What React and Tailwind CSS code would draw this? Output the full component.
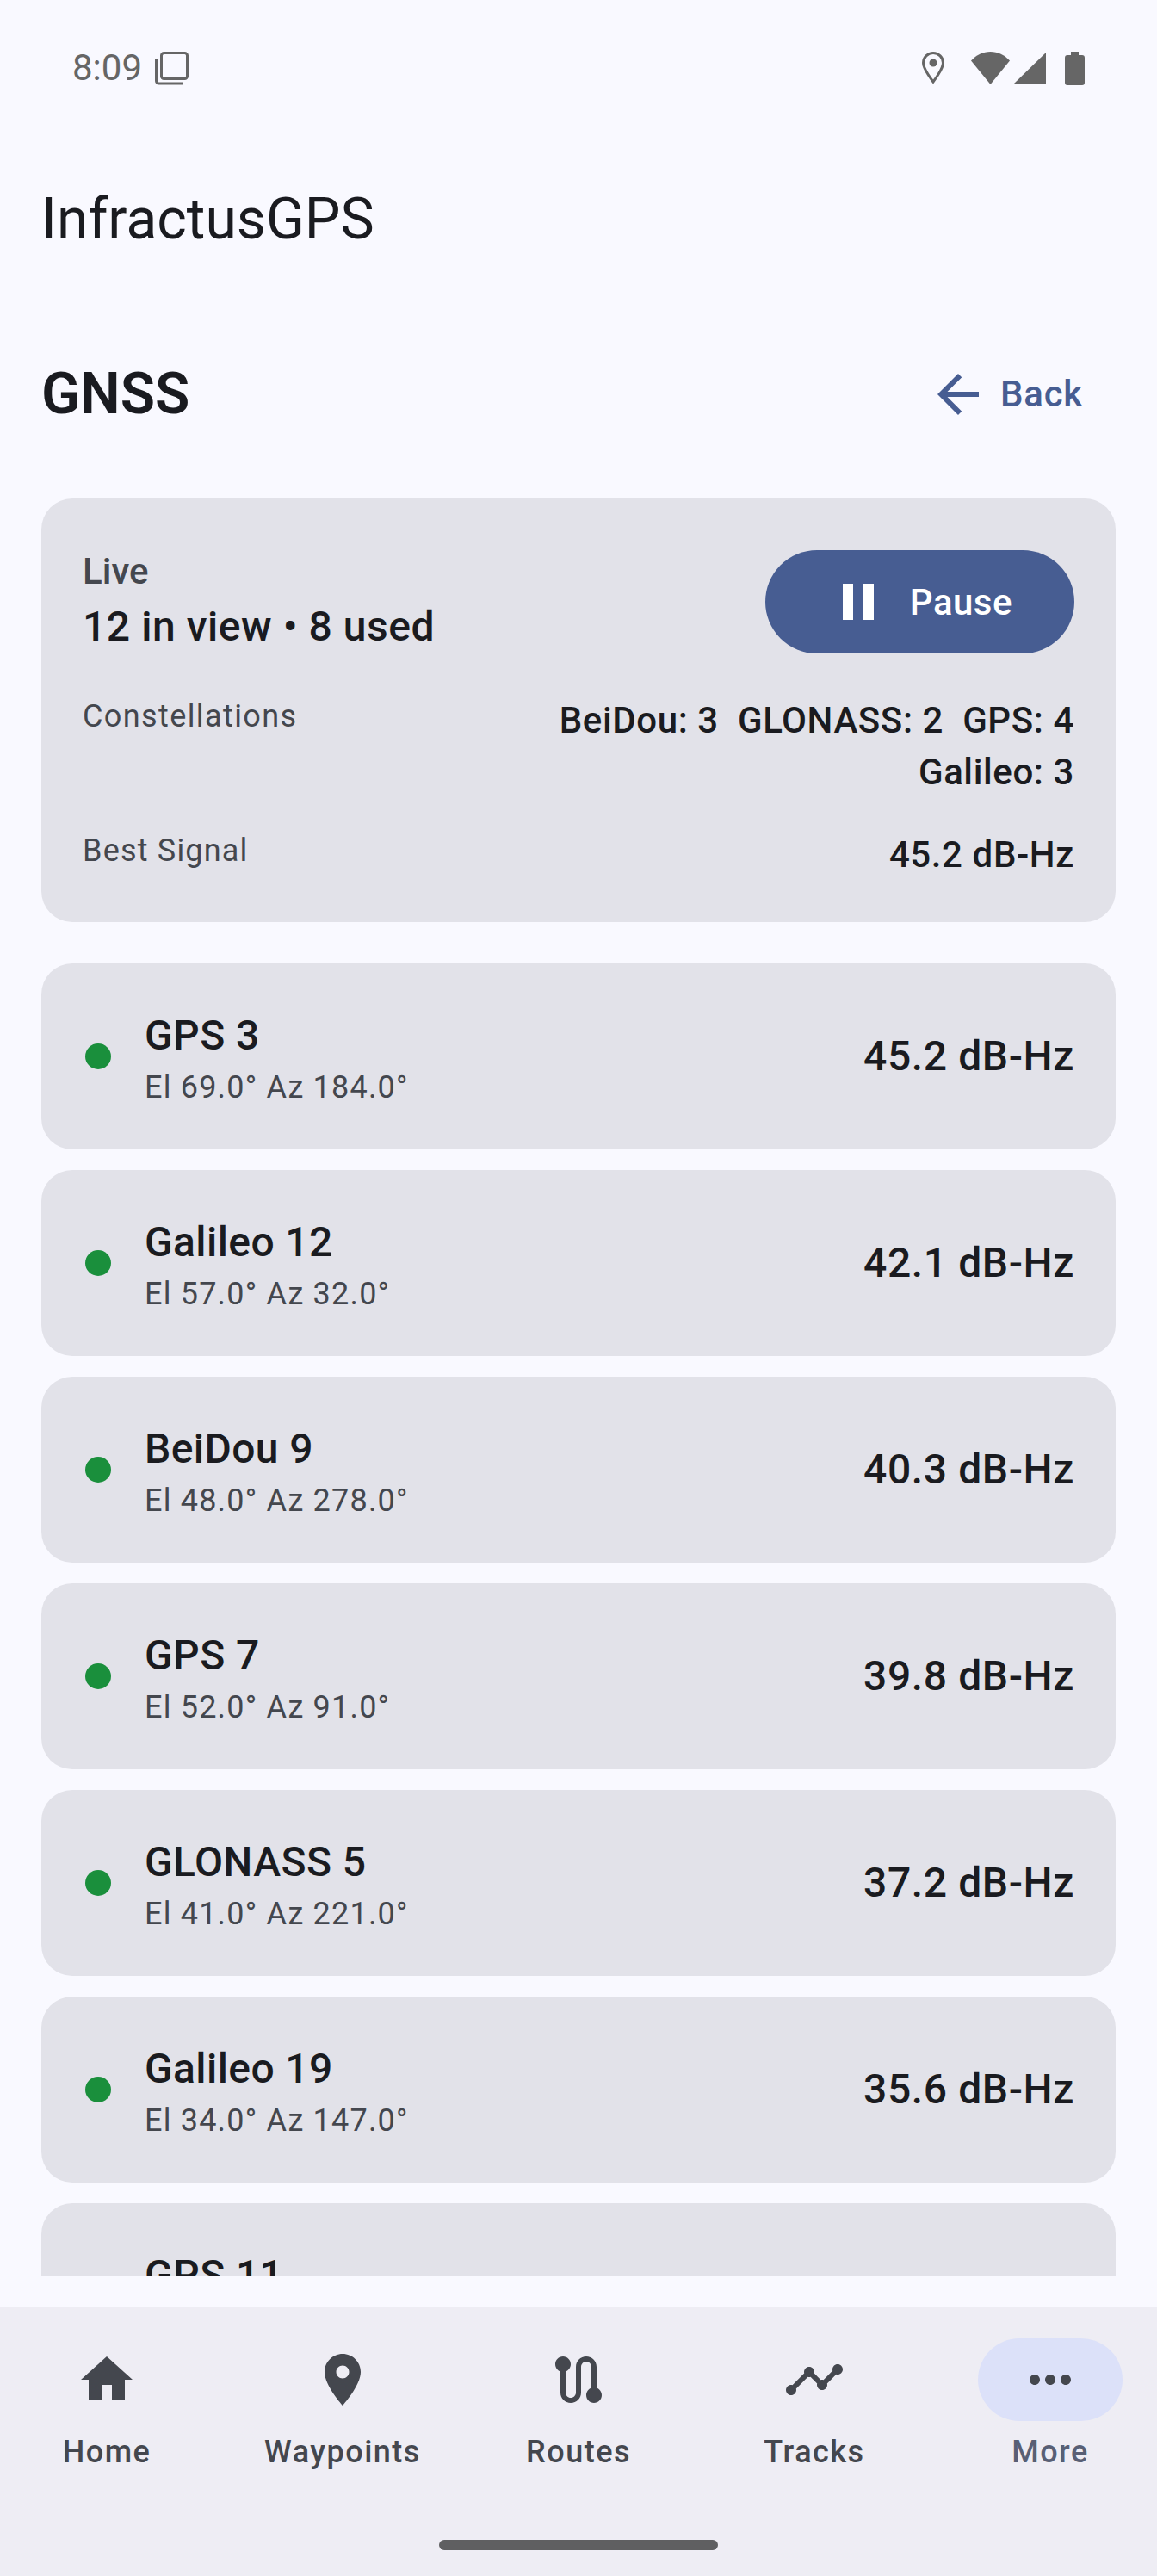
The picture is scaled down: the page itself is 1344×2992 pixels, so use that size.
import React from 'react';

const FONT = "font-['Roboto',sans-serif]";

// the last row is cut by the list edge: only its name shows in the picture
const satellites = [
  { name: 'GPS 3', pos: 'El 69.0° Az 184.0°', snr: '45.2 dB-Hz' },
  { name: 'Galileo 12', pos: 'El 57.0° Az 32.0°', snr: '42.1 dB-Hz' },
  { name: 'BeiDou 9', pos: 'El 48.0° Az 278.0°', snr: '40.3 dB-Hz' },
  { name: 'GPS 7', pos: 'El 52.0° Az 91.0°', snr: '39.8 dB-Hz' },
  { name: 'GLONASS 5', pos: 'El 41.0° Az 221.0°', snr: '37.2 dB-Hz' },
  { name: 'Galileo 19', pos: 'El 34.0° Az 147.0°', snr: '35.6 dB-Hz' },
  { name: 'GPS 11', pos: '', snr: '' },
];

const navItems = [
  { label: 'Home', d: 'M10 20v-6h4v6h5v-8h3L12 3 2 12h3v8z' },
  { label: 'Waypoints', d: 'M12 2C8.13 2 5 5.13 5 9c0 5.25 7 13 7 13s7-7.75 7-13c0-3.87-3.13-7-7-7zm0 9.5c-1.38 0-2.5-1.12-2.5-2.5s1.12-2.5 2.5-2.5 2.5 1.12 2.5 2.5-1.12 2.5-2.5 2.5z' },
  { label: 'Routes', d: 'M19 15.18V7c0-2.21-1.79-4-4-4s-4 1.79-4 4v10c0 1.1-.9 2-2 2s-2-.9-2-2V8.82C8.16 8.4 9 7.3 9 6c0-1.66-1.34-3-3-3S3 4.34 3 6c0 1.3.84 2.4 2 2.82V17c0 2.21 1.79 4 4 4s4-1.79 4-4V7c0-1.1.9-2 2-2s2 .9 2 2v8.18c-1.16.41-2 1.51-2 2.82 0 1.66 1.34 3 3 3s3-1.34 3-3c0-1.3-.84-2.4-2-2.82z' },
  { label: 'Tracks', d: 'M23 8c0 1.1-.9 2-2 2-.18 0-.35-.02-.51-.07l-3.56 3.55c.05.16.07.34.07.52 0 1.1-.9 2-2 2s-2-.9-2-2c0-.18.02-.36.07-.52l-2.55-2.55c-.16.05-.34.07-.52.07s-.36-.02-.52-.07l-4.55 4.56c.05.16.07.33.07.51 0 1.1-.9 2-2 2s-2-.9-2-2 .9-2 2-2c.18 0 .35.02.51.07l4.56-4.55C8.02 9.36 8 9.18 8 9c0-1.1.9-2 2-2s2 .9 2 2c0 .18-.02.36-.07.52l2.55 2.55c.16-.05.34-.07.52-.07s.36.02.52.07l3.55-3.56C19.02 8.35 19 8.18 19 8c0-1.1.9-2 2-2s2 .9 2 2z' },
  { label: 'More', active: true, d: 'M6 10c-1.1 0-2 .9-2 2s.9 2 2 2 2-.9 2-2-.9-2-2-2zm12 0c-1.1 0-2 .9-2 2s.9 2 2 2 2-.9 2-2-.9-2-2-2zm-6 0c-1.1 0-2 .9-2 2s.9 2 2 2 2-.9 2-2-.9-2-2-2z' },
];

const StatusBar = () => (
  <div className="h-[158px] shrink-0 pl-[84px] pr-[84px] flex items-center justify-between text-[#666666]">
    <div className="flex items-center gap-[14px]">
      <span className="text-[42px] leading-[50px]">8:09</span>
      <svg width="40" height="40" viewBox="0 0 40 40" fill="none" stroke="#666666" strokeWidth="3">
        <rect x="8.5" y="2.5" width="30" height="30" rx="3" />
        <path d="M2.5 9v26a3 3 0 0 0 3 3H33" />
      </svg>
    </div>
    <div className="flex items-center">
      <svg width="26" height="38" viewBox="0 0 26 38" className="mr-[31px]">
        <path d="M13 1.5C6.6 1.5 1.5 6.6 1.5 13c0 7.500 11.500 22 11.500 22s11.500-14.500 11.500-22C24.500 6.600 19.400 1.500 13 1.500z" fill="none" stroke="#666666" strokeWidth="3" />
        <circle cx="13" cy="13" r="4.500" fill="#666666" />
      </svg>
      <svg width="88" height="38" viewBox="0 0 88 38" className="mr-[21px]" fill="#666666">
        <path d="M0 10.500C6 4 14 0 22.500 0S39 4 45 10.500L22.500 38z" />
        <path d="M87 1v37H49z" />
      </svg>
      <svg width="23" height="39" viewBox="0 0 23 39" fill="#666666">
        <path d="M7 0h9v4h4a3 3 0 0 1 3 3v29a3 3 0 0 1-3 3H3a3 3 0 0 1-3-3V7a3 3 0 0 1 3-3h4z" />
      </svg>
    </div>
  </div>
);

const Row = ({ name, pos, snr }) => (
  <div className="h-[216px] shrink-0 rounded-[36px] bg-[#e2e2e9] px-[48px] flex items-center">
    <div className="w-[30px] h-[30px] rounded-full bg-[#1a8f3c] ml-[3px] mr-[39px] shrink-0" />
    <div className="flex-1 pt-[6px]">
      <div className="text-[48px] leading-[60px] font-[550] tracking-[0.4px] text-[#1a1b20]">{name}</div>
      <div className="mt-[6px] min-h-[48px] text-[36px] leading-[48px] tracking-[1.2px] text-[#44474e]">{pos}</div>
    </div>
    <div className="text-[48px] leading-[60px] font-[550] tracking-[0.6px] text-[#1a1b20]">{snr}</div>
  </div>
);

export default function App() {
  return (
    <div className={`relative w-[1344px] h-[2992px] overflow-hidden flex flex-col bg-[#f9f9ff] ${FONT}`}>
      <StatusBar />

      {/* App title */}
      <div className="h-[193px] shrink-0 px-[48px] flex items-center text-[66px] leading-[84px] text-[#1a1b20]">
        InfractusGPS
      </div>

      {/* Screen header */}
      <div className="h-[214px] shrink-0 pl-[48px] pr-[62px] flex items-center justify-between">
        <h1 className="text-[66px] leading-[84px] font-semibold text-[#1a1b20]">GNSS</h1>
        <div className="flex items-center gap-[13px] pl-[24px] pr-[24px] text-[#475d92]">
          <svg width="72" height="72" viewBox="0 0 24 24" fill="#475d92"><path d="M20 11H7.830l5.590-5.590L12 4l-8 8 8 8 1.410-1.410L7.830 13H20v-2z" /></svg>
          <span className="text-[42px] leading-[60px] font-medium tracking-[0.75px]">Back</span>
        </div>
      </div>

      {/* Scrolling content */}
      <div className="flex-1 min-h-0 overflow-hidden mt-[14px] mb-[36px] px-[48px] flex flex-col gap-[24px]">
        <div className="h-[492px] shrink-0 mb-[24px] rounded-[36px] bg-[#e2e2e9] px-[48px] pt-[60px]">
          <div className="flex items-center justify-between">
            <div>
              <div className="text-[42px] leading-[50px] font-medium text-[#44474e]">Live</div>
              <div className="mt-[8px] text-[48px] leading-[62px] font-[550] tracking-[0.55px] text-[#1a1b20]">12 in view • 8 used</div>
            </div>
            <button className="h-[120px] rounded-full bg-[#475d92] px-[72px] flex items-center gap-[24px] text-white">
              <svg width="72" height="72" viewBox="0 0 24 24" fill="white"><path d="M6 19h4V5H6v14zm8-14v14h4V5h-4z" /></svg>
              <span className="text-[42px] font-medium tracking-[0.5px]">Pause</span>
            </button>
          </div>
          <div className="flex justify-between mt-[48px]">
            <div className="pt-[1px] text-[36px] leading-[48px] tracking-[1.4px] text-[#44474e]">Constellations</div>
            <div className="w-[680px] text-right text-[42px] leading-[60px] font-[550] tracking-[0.6px] text-[#1a1b20]">
              BeiDou: 3&nbsp; GLONASS: 2&nbsp; GPS: 4<br />Galileo: 3
            </div>
          </div>
          <div className="flex justify-between mt-[36px]">
            <div className="pt-[1px] text-[36px] leading-[48px] tracking-[1.2px] text-[#44474e]">Best Signal</div>
            <div className="text-[42px] leading-[60px] font-[550] tracking-[0.6px] text-[#1a1b20]">45.2 dB-Hz</div>
          </div>
        </div>
        {satellites.map(s => <Row key={s.name} {...s} />)}
      </div>

      {/* Bottom navigation */}
      <div className="h-[312px] shrink-0 bg-[#eeedf4] px-[40px] pt-[36px] flex justify-between">
        {navItems.map(item => (
          <div key={item.label} className="w-[168px] flex flex-col items-center">
            <div className={`w-[168px] h-[96px] rounded-full flex items-center justify-center ${item.active ? 'bg-[#dce1f9]' : ''}`}>
              <svg width="72" height="72" viewBox="0 0 24 24" fill="#44474e"><path d={item.d} /></svg>
            </div>
            <span className={`mt-[12px] whitespace-nowrap text-[36px] leading-[48px] font-medium tracking-[1.5px] ${item.active ? 'text-[#585f75]' : 'text-[#44474e]'}`}>{item.label}</span>
          </div>
        ))}
      </div>

      {/* Gesture handle */}
      <div className="absolute top-[2950px] left-[510px] w-[324px] h-[12px] rounded-full bg-[#5f5f61]" />
    </div>
  );
}
